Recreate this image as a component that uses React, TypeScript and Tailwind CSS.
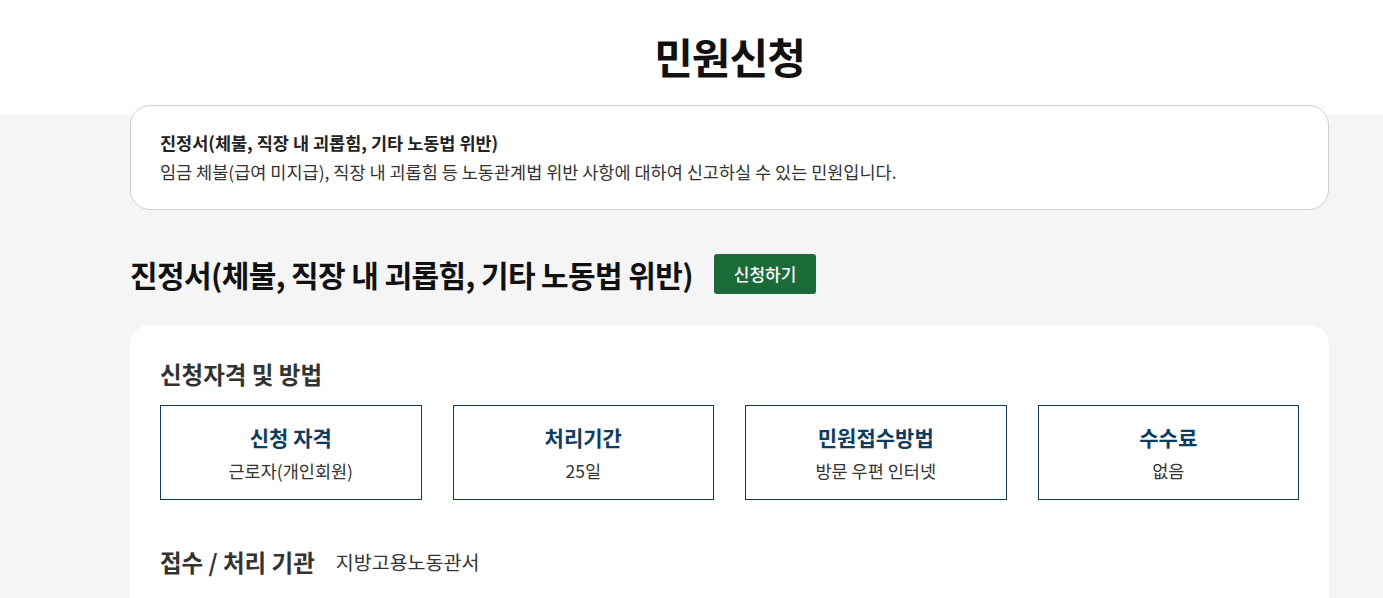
import React from "react";

interface IInfo {
  title: string;
  value: string;
}

const infos: IInfo[] = [
  { title: "신청 자격", value: "근로자(개인회원)" },
  { title: "처리기간", value: "25일" },
  { title: "민원접수방법", value: "방문 우편 인터넷" },
  { title: "수수료", value: "없음" },
];

const App: React.FC = () => {
  return (
    <div
      className="min-h-screen bg-[#f5f5f5] text-[#222]"
      style={{ fontFamily: '"Noto Sans CJK KR", "Noto Sans", sans-serif' }}
    >
      <div className="h-[115px] bg-white">
        <div className="ml-[130px] w-[1199px] pt-[27px] text-center">
          <h1 className="text-[42px] font-bold leading-[58px] tracking-[-1px] text-[#111]">민원신청</h1>
        </div>
      </div>

      <div className="ml-[130px] w-[1199px] -mt-[10px]">
        <div className="rounded-[20px] border border-[#d0d0d0] bg-white px-[29px] pt-[22px] pb-[23px]">
          <p className="text-[17.5px] font-bold leading-[29px] text-[#222]">
            진정서(체불, 직장 내 괴롭힘, 기타 노동법 위반)
          </p>
          <p className="text-[17.5px] leading-[29px] text-[#333]">
            임금 체불(급여 미지급), 직장 내 괴롭힘 등 노동관계법 위반 사항에 대하여 신고하실 수 있는 민원입니다.
          </p>
        </div>

        <div className="mt-[43px] flex items-center gap-[21px]">
          <h2 className="text-[30px] font-bold leading-[42px] tracking-[-0.6px] text-[#111]">
            진정서(체불, 직장 내 괴롭힘, 기타 노동법 위반)
          </h2>
          <button className="h-[40px] w-[102px] rounded-[3px] bg-[#1a6b38] text-[17px] font-medium text-white">
            신청하기
          </button>
        </div>

        <div className="mt-[30px] rounded-t-[20px] bg-white px-[30px] pt-[33px] pb-[40px]">
          <h3 className="text-[23.5px] font-bold leading-[32px] text-[#333]">신청자격 및 방법</h3>
          <div className="mt-[15px] grid grid-cols-4 gap-[31px]">
            {infos.map((info) => (
              <div
                key={info.title}
                className="flex h-[95px] flex-col items-center justify-center border border-[#0d3c61]"
              >
                <span className="text-[21px] font-bold leading-[30px] text-[#0d3c61]">{info.title}</span>
                <span className="mt-[6px] text-[17.5px] leading-[26px] text-[#333]">{info.value}</span>
              </div>
            ))}
          </div>
          <div className="mt-[46px] flex items-center gap-[21px]">
            <h3 className="text-[23.5px] font-bold leading-[32px] text-[#333]">접수 / 처리 기관</h3>
            <span className="text-[19.5px] leading-[28px] text-[#333]">지방고용노동관서</span>
          </div>
        </div>
      </div>
    </div>
  );
};

export default App;
